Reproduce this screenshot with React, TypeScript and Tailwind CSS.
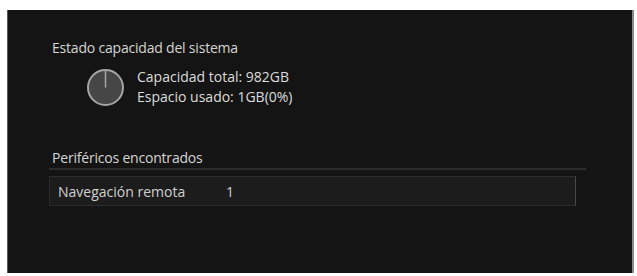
export default function App() {
  return (
    <div className="w-[637px] h-[276px] bg-white pt-[10px] pl-[7px] pr-[3px] pb-[3px]" style={{ fontFamily: '"Open Sans", "Noto Sans", sans-serif' }}>
      <div className="h-full bg-[#141414] border-l border-l-[#5a5a5a] border-r-2 border-r-[#8a8a8a] pt-[29px] pl-[44px] pr-[46px]">
        {/* Estado capacidad */}
        <div className="text-[14px] leading-[18px] font-medium text-[#d4d4d4] tracking-[-0.2px]">Estado capacidad del sistema</div>
        <div className="flex items-center mt-[10px] ml-[34px]">
          <svg width="39" height="39" viewBox="0 0 39 39" className="shrink-0">
            <circle cx="19.5" cy="19.5" r="17.5" fill="#464646" stroke="#a4a4a4" strokeWidth="2" />
            <line x1="19.5" y1="3" x2="19.5" y2="19.5" stroke="#a4a4a4" strokeWidth="1.5" />
          </svg>
          <div className="ml-[12px] text-[14px] leading-[20px] font-medium text-[#dcdcdc]">
            <div>Capacidad total: 982GB</div>
            <div>Espacio usado: 1GB(0%)</div>
          </div>
        </div>

        {/* Periféricos */}
        <div className="mt-[42px] text-[14px] leading-[18px] font-medium text-[#d4d4d4] tracking-[-0.2px]">Periféricos encontrados</div>
        <div className="mt-[1px] -ml-[3px] h-[2px] bg-[#2c2c2c]" />
        <div className="mt-[6px] -ml-[3px] mr-[10px] h-[30px] flex items-center bg-[#1c1c1c] border border-[#2c2c2c] border-r-[#4a4a4a] pl-[8px] text-[14px] font-medium text-[#d0d0d0]">
          <span className="w-[168px]">Navegación remota</span>
          <span>1</span>
        </div>
      </div>
    </div>
  );
}
